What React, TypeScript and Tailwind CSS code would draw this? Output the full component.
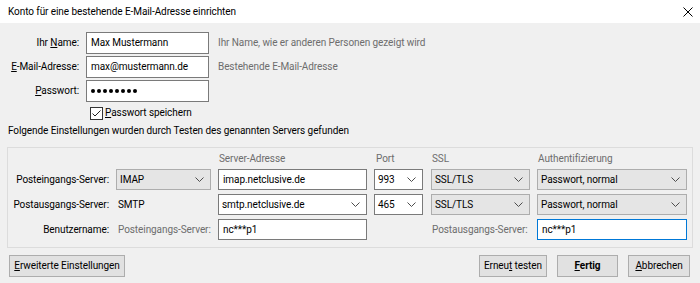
import React from "react";

const font = { fontFamily: 'Roboto, "Noto Sans", sans-serif' };

function Chevron() {
  return (
    <svg width="9" height="5" viewBox="0 0 9 5" className="shrink-0">
      <path d="M0.5 0.5 L4.5 4.5 L8.5 0.5" fill="none" stroke="#4d4d4d" strokeWidth="1" />
    </svg>
  );
}

function TextBox({ value, w, h = "h-[21px]", focus }: { value: string; w: string; h?: string; focus?: boolean }) {
  return (
    <div
      className={`${w} ${h} bg-white border ${focus ? "border-[#0078d7]" : "border-[#7a7a7a]"} flex items-center pl-[4px] text-black whitespace-nowrap`}
    >
      {value}
    </div>
  );
}

function Combo({ value, w, gray }: { value: string; w: string; gray?: boolean }) {
  return (
    <div
      className={`${w} h-[21px] border ${gray ? "bg-[#e5e5e5] border-[#adadad]" : "bg-white border-[#7a7a7a]"} flex items-center justify-between pl-[3px] pr-[6px] text-black whitespace-nowrap`}
    >
      <span>{value}</span>
      <Chevron />
    </div>
  );
}

function Button({ children, w, bold }: { children: React.ReactNode; w: string; bold?: boolean }) {
  return (
    <div
      className={`${w} h-[22px] bg-[#e1e1e1] border border-[#adadad] flex items-center justify-center text-black whitespace-nowrap ${bold ? "font-bold" : ""}`}
    >
      {children}
    </div>
  );
}

const cols = "grid grid-cols-[101px_95px_149px_50px_99px_150px] gap-x-[7px]";

export default function App() {
  return (
    <div
      className="w-[700px] h-[283px] bg-[#f0f0f0] text-[10px] tracking-[-0.08px] leading-[14px] text-black overflow-hidden whitespace-nowrap"
      style={font}
    >
      {/* Title bar */}
      <div className="h-[23px] bg-white flex items-center justify-between pl-[8px] pr-[7px]">
        <span>Konto für eine bestehende E-Mail-Adresse einrichten</span>
        <svg width="10" height="10" viewBox="0 0 10 10">
          <path d="M0.5 0.5 L9.5 9.5 M9.5 0.5 L0.5 9.5" stroke="#000" strokeWidth="1" />
        </svg>
      </div>

      {/* Top form */}
      <div className="pt-[9px] flex flex-col gap-[2px]">
        <div className="flex items-center">
          <div className="w-[79px] text-right">
            Ihr <u>N</u>ame:
          </div>
          <div className="ml-[7px]">
            <TextBox value="Max Mustermann" w="w-[123px]" h="h-[22px]" />
          </div>
          <div className="ml-[9px] text-[#6d6d6d]">Ihr Name, wie er anderen Personen gezeigt wird</div>
        </div>
        <div className="flex items-center">
          <div className="w-[79px] text-right">
            <u>E</u>-Mail-Adresse:
          </div>
          <div className="ml-[7px]">
            <TextBox value="max@mustermann.de" w="w-[123px]" h="h-[22px]" />
          </div>
          <div className="ml-[9px] text-[#6d6d6d]">Bestehende E-Mail-Adresse</div>
        </div>
        <div className="flex items-center">
          <div className="w-[79px] text-right">
            <u>P</u>asswort:
          </div>
          <div className="ml-[7px]">
            <div className="w-[123px] h-[22px] bg-white border border-[#7a7a7a] flex items-center pl-[4px] gap-[2px]">
              {Array.from({ length: 8 }).map((_, i) => (
                <span key={i} className="w-[4px] h-[4px] rounded-full bg-black inline-block" />
              ))}
            </div>
          </div>
        </div>
        <div className="flex items-center h-[18px] ml-[90px]">
          <div className="w-[13px] h-[13px] border border-[#333] bg-white flex items-center justify-center">
            <svg width="11" height="11" viewBox="0 0 11 11">
              <path d="M1.5 5.5 L4 8 L9.5 2.5" fill="none" stroke="#222" strokeWidth="1" />
            </svg>
          </div>
          <span className="ml-[2px]">
            <u>P</u>asswort speichern
          </span>
        </div>
        <div className="pl-[8px] h-[14px]">Folgende Einstellungen wurden durch Testen des genannten Servers gefunden</div>
      </div>

      {/* Group box */}
      <div className="mt-[9px] ml-[7px] w-[686px] h-[101px] border border-[#dcdcdc] pt-[3px]">
        <div className={`${cols} items-center h-[16px]`}>
          <div />
          <div />
          <div className="text-[#6d6d6d] pl-[1px]">Server-Adresse</div>
          <div className="text-[#6d6d6d] pl-[2px]">Port</div>
          <div className="text-[#6d6d6d] pl-[1px]">SSL</div>
          <div className="text-[#6d6d6d] pl-[1px]">Authentifizierung</div>
        </div>
        <div className={`${cols} gap-y-[4px] items-center mt-[2px]`}>
          {/* Row 1 */}
          <div className="text-right">Posteingangs-Server:</div>
          <Combo value="IMAP" w="w-[95px]" gray />
          <TextBox value="imap.netclusive.de" w="w-[149px]" />
          <Combo value="993" w="w-[49px]" />
          <Combo value="SSL/TLS" w="w-[99px]" gray />
          <Combo value="Passwort, normal" w="w-[150px]" gray />

          {/* Row 2 */}
          <div className="text-right">Postausgangs-Server:</div>
          <div className="pl-[2px]">SMTP</div>
          <Combo value="smtp.netclusive.de" w="w-[149px]" />
          <Combo value="465" w="w-[49px]" />
          <Combo value="SSL/TLS" w="w-[99px]" gray />
          <Combo value="Passwort, normal" w="w-[150px]" gray />

          {/* Row 3 */}
          <div className="text-right">Benutzername:</div>
          <div className="text-[#6d6d6d] pl-[2px]">Posteingangs-Server:</div>
          <TextBox value="nc***p1" w="w-[149px]" />
          <div />
          <div className="text-[#6d6d6d] pl-[1px]">Postausgangs-Server:</div>
          <TextBox value="nc***p1" w="w-[150px]" focus />
        </div>
      </div>

      {/* Buttons */}
      <div className="mt-[7px] flex items-center justify-between pl-[9px] pr-[10px]">
        <Button w="w-[116px]">
          <span>
            <u>E</u>rweiterte Einstellungen
          </span>
        </Button>
        <div className="flex gap-[10px]">
          <Button w="w-[68px]">
            <span>
              Erneu<u>t</u> testen
            </span>
          </Button>
          <Button w="w-[61px]" bold>
            <span>
              <u>F</u>ertig
            </span>
          </Button>
          <Button w="w-[62px]">
            <span>
              <u>A</u>bbrechen
            </span>
          </Button>
        </div>
      </div>
    </div>
  );
}
